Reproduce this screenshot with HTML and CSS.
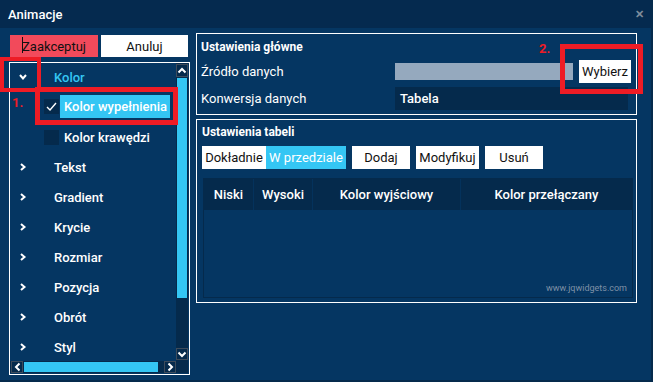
FILE: index.html
```html
<!DOCTYPE html>
<html lang="pl">
<head>
<meta charset="utf-8">
<title>Animacje</title>
<link rel="stylesheet" href="styles.css">
</head>
<body>
<div class="window">
  <div class="titlebar">
    <span class="title">Animacje</span>
    <span class="close">&#x2715;</span>
  </div>
  <div class="main">
    <div class="left">
      <div class="btnrow">
        <div class="btn btn-red"><span class="caret"></span>Zaakceptuj</div>
        <div class="btn btn-white">Anuluj</div>
      </div>
      <div class="tree">
        <div class="items">
          <div class="row row-first">
            <svg class="chev" width="8" height="6" viewBox="0 0 8 6"><polyline points="1,1 4,4.5 7,1" fill="none" stroke="#fff" stroke-width="2"/></svg>
            <span class="lbl lbl-active">Kolor</span>
          </div>
          <div class="row child row-sel">
            <span class="cb"><svg width="11" height="9" viewBox="0 0 11 9"><polyline points="1,5 4,8 10,1" fill="none" stroke="#fff" stroke-width="1.4"/></svg></span>
            <span class="lbl lbl-sel">Kolor wypełnienia</span>
          </div>
          <div class="row child">
            <span class="cb"></span>
            <span class="lbl lbl-child">Kolor krawędzi</span>
          </div>
          <div class="row"><svg class="chev" width="8" height="8" viewBox="0 0 8 8"><polyline points="2,1 5.5,4 2,7" fill="none" stroke="#fff" stroke-width="2"/></svg><span class="lbl">Tekst</span></div>
          <div class="row"><svg class="chev" width="8" height="8" viewBox="0 0 8 8"><polyline points="2,1 5.5,4 2,7" fill="none" stroke="#fff" stroke-width="2"/></svg><span class="lbl">Gradient</span></div>
          <div class="row"><svg class="chev" width="8" height="8" viewBox="0 0 8 8"><polyline points="2,1 5.5,4 2,7" fill="none" stroke="#fff" stroke-width="2"/></svg><span class="lbl">Krycie</span></div>
          <div class="row"><svg class="chev" width="8" height="8" viewBox="0 0 8 8"><polyline points="2,1 5.5,4 2,7" fill="none" stroke="#fff" stroke-width="2"/></svg><span class="lbl">Rozmiar</span></div>
          <div class="row"><svg class="chev" width="8" height="8" viewBox="0 0 8 8"><polyline points="2,1 5.5,4 2,7" fill="none" stroke="#fff" stroke-width="2"/></svg><span class="lbl">Pozycja</span></div>
          <div class="row"><svg class="chev" width="8" height="8" viewBox="0 0 8 8"><polyline points="2,1 5.5,4 2,7" fill="none" stroke="#fff" stroke-width="2"/></svg><span class="lbl">Obrót</span></div>
          <div class="row"><svg class="chev" width="8" height="8" viewBox="0 0 8 8"><polyline points="2,1 5.5,4 2,7" fill="none" stroke="#fff" stroke-width="2"/></svg><span class="lbl">Styl</span></div>
        </div>
        <div class="vscroll">
          <div class="sbtn"><svg width="10" height="7" viewBox="0 0 10 7"><polyline points="1.5,5.5 5,2 8.5,5.5" fill="none" stroke="#fff" stroke-width="2"/></svg></div>
          <div class="vthumb"></div>
          <div class="vspace"></div>
          <div class="sbtn"><svg width="10" height="7" viewBox="0 0 10 7"><polyline points="1.5,1.5 5,5 8.5,1.5" fill="none" stroke="#fff" stroke-width="2"/></svg></div>
        </div>
        <div class="hscroll">
          <div class="sbtn"><svg width="7" height="10" viewBox="0 0 7 10"><polyline points="5.5,1.5 2,5 5.5,8.5" fill="none" stroke="#fff" stroke-width="2"/></svg></div>
          <div class="hthumb"></div>
          <div class="hspace"></div>
          <div class="sbtn"><svg width="7" height="10" viewBox="0 0 7 10"><polyline points="1.5,1.5 5,5 1.5,8.5" fill="none" stroke="#fff" stroke-width="2"/></svg></div>
        </div>
        <div class="corner"></div>
      </div>
    </div>
    <div class="right">
      <div class="panel panel-main">
        <div class="ptitle">Ustawienia główne</div>
        <div class="frow">
          <span class="flabel">Źródło danych</span>
          <span class="finput"></span>
          <span class="btn btn-white btn-pick">Wybierz</span>
        </div>
        <div class="frow frow-conv">
          <span class="flabel">Konwersja danych</span>
          <span class="fselect">Tabela</span>
        </div>
      </div>
      <div class="panel panel-table">
        <div class="ptitle ptitle-2">Ustawienia tabeli</div>
        <div class="toolbar">
          <div class="seg">
            <span class="btn btn-white tb-1">Dokładnie</span>
            <span class="btn btn-blue tb-2">W przedziale</span>
          </div>
          <span class="btn btn-white tb-3">Dodaj</span>
          <span class="btn btn-white tb-4">Modyfikuj</span>
          <span class="btn btn-white tb-5">Usuń</span>
        </div>
        <div class="grid">
          <div class="ghead">
            <span class="gcol gc-1">Niski</span>
            <span class="gcol gc-2">Wysoki</span>
            <span class="gcol gc-3">Kolor wyjściowy</span>
            <span class="gcol gc-4">Kolor przełączany</span>
          </div>
          <div class="gbody">
            <span class="watermark">www.jqwidgets.com</span>
          </div>
        </div>
      </div>
    </div>
  </div>
  <div class="anno anno-1"></div>
  <div class="anno anno-2"></div>
  <div class="anno anno-3"></div>
  <span class="anno-num num-1">1.</span>
  <span class="anno-num num-2">2.</span>
</div>
</body>
</html>
```

FILE: styles.css
```css
* { box-sizing: border-box; }
html, body { margin: 0; padding: 0; }
body {
  font-family: Roboto, "Noto Sans", "Liberation Sans", sans-serif;
  font-size: 13px;
  color: #fff;
  background: #053662;
}
.window {
  position: relative;
  width: 653px;
  height: 382px;
  background: #053662;
  border-right: 2px solid #052a4c;
  border-bottom: 2px solid #052a4c;
  overflow: hidden;
}
.titlebar {
  height: 28px;
  background: #052a4f;
  display: flex;
  align-items: center;
  justify-content: space-between;
  padding: 0 7px 0 8px;
}
.title { font-size: 13px; font-weight: 500; color: #fff; }
.close { font-size: 11px; font-weight: 700; color: #7f8d9c; }

.main {
  display: flex;
  padding: 5px 0 0 9px;
  gap: 6px;
}
.left { width: 181px; }
.btnrow {
  display: flex;
  gap: 3px;
  margin: 2px 0 0 1px;
  height: 22px;
}
.btn {
  display: flex;
  align-items: center;
  justify-content: center;
  font-size: 13px;
  color: #111;
  white-space: nowrap;
}
.btn-red { width: 88px; background: #f24a5b; position: relative; }
.btnrow .btn-white { width: 87px; }
.btn-white { background: #fff; }
.btn-blue { background: #34c6f4; color: #fff; }
.caret {
  position: absolute;
  left: 12px;
  top: 2px;
  width: 1px;
  height: 16px;
  background: #111;
}

.tree {
  margin-top: 5px;
  height: 313px;
  border: 1px solid #fff;
  display: grid;
  grid-template-columns: 166px 12px;
  grid-template-rows: 298px 12px;
}
.items { overflow: hidden; }
.row {
  height: 30px;
  display: flex;
  align-items: center;
  font-weight: 500;
}
.row-first { height: 28px; }
.row-sel { height: 31px; }
.chev { margin-left: 9px; margin-right: 27px; flex: none; }
.lbl { color: #fff; white-space: nowrap; }
.lbl-active { color: #34c6f4; }
.child { padding-left: 34px; }
.cb {
  width: 15px;
  height: 15px;
  background: #052a4c;
  display: flex;
  align-items: center;
  justify-content: center;
  flex: none;
}
.lbl-sel {
  margin-left: 1px;
  width: 110px;
  height: 23px;
  background: #34c6f4;
  display: flex;
  align-items: center;
  padding-left: 4px;
}
.lbl-child { margin-left: 5px; }

.vscroll {
  background: #052a4c;
  display: flex;
  flex-direction: column;
}
.sbtn {
  width: 12px;
  height: 13px;
  border: 1px solid #3d4b5b;
  display: flex;
  align-items: center;
  justify-content: center;
  flex: none;
}
.vscroll .sbtn:first-child { margin-top: 1px; }
.vscroll .sbtn:last-child { margin-bottom: 1px; height: 12px; }
.vthumb { margin: 1px 1px 0 1px; height: 220px; background: #34c6f4; }
.vspace { flex: 1; }
.hscroll {
  background: #052a4c;
  display: flex;
  align-items: center;
}
.hscroll .sbtn { height: 12px; width: 12px; }
.hscroll .sbtn:first-child { margin-left: 1px; }
.hthumb { margin-left: 1px; width: 134px; height: 10px; background: #34c6f4; }
.hspace { flex: 1; }
.corner { background: #052a4c; }

.right { width: 441px; display: flex; flex-direction: column; gap: 4px; }
.panel { border: 1px solid #fff; }
.panel-main { height: 82px; padding: 0 5px 0 4px; }
.ptitle { font-weight: 700; font-size: 12px; height: 24px; display: flex; align-items: center; padding-top: 1px; }
.frow { display: flex; align-items: center; height: 26px; }
.flabel { width: 194px; font-size: 13px; }
.finput { width: 178px; height: 17px; background: #95a9be; }
.btn-pick { margin-left: 6px; width: 52px; height: 23px; }
.frow-conv { margin-top: 3px; height: 23px; }
.fselect {
  width: 233px;
  height: 23px;
  background: #052a4c;
  display: flex;
  align-items: center;
  padding-left: 5px;
  font-weight: 500;
}

.panel-table { height: 184px; padding: 0 4px 0 5px; }
.ptitle-2 { height: 22px; padding-top: 1px; }
.toolbar { display: flex; gap: 6px; margin-top: 4px; height: 23px; }
.seg { display: flex; }
.tb-1 { width: 64px; }
.tb-2 { width: 80px; }
.tb-3 { width: 58px; }
.tb-4 { width: 63px; }
.tb-5 { width: 58px; }
.grid {
  margin-top: 9px;
  margin-left: 1px;
  width: 430px;
  height: 120px;
  border: 1px solid #052a4c;
  display: flex;
  flex-direction: column;
}
.ghead {
  height: 31px;
  background: #052a4c;
  display: flex;
  font-weight: 500;
}
.gcol {
  display: flex;
  align-items: center;
  justify-content: center;
  border-right: 1px solid #04325c;
}
.gc-1 { width: 50px; }
.gc-2 { width: 59px; }
.gc-3 { width: 148px; }
.gc-4 { flex: 1; border-right: none; }
.gbody {
  flex: 1;
  display: flex;
  align-items: flex-end;
  justify-content: flex-end;
  padding: 0 5px 4px 0;
}
.watermark { font-size: 9px; color: #7f91a6; }

.anno {
  position: absolute;
  border-style: solid;
  border-color: #ee1c25;
}
.anno-1 { left: 0; top: 57px; width: 41px; height: 35px; border-width: 4px; }
.anno-2 { left: 35px; top: 87px; width: 143px; height: 38px; border-width: 5px; }
.anno-3 { left: 560px; top: 44px; width: 83px; height: 50px; border-width: 5px; }
.anno-num {
  position: absolute;
  color: #ee1c25;
  font-weight: 700;
  font-size: 13px;
  line-height: 13px;
}
.num-1 { left: 12px; top: 96px; }
.num-2 { left: 539px; top: 42px; }
```
